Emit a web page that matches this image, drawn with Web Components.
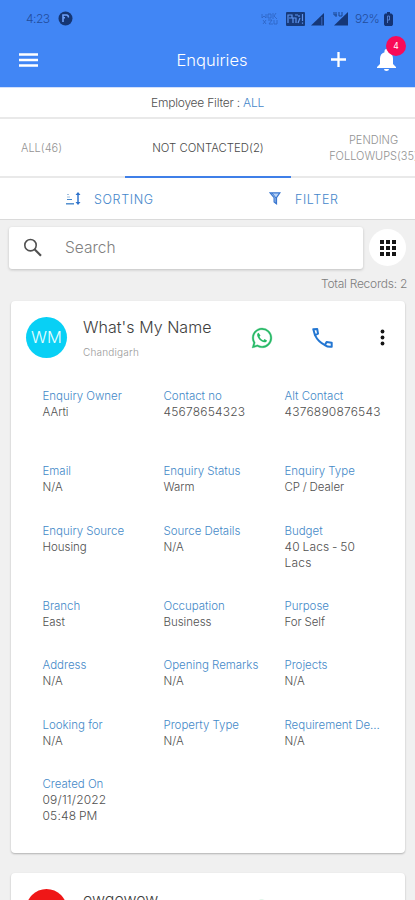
<!DOCTYPE html>
<html lang="en"><head><meta charset="utf-8"><title>Enquiries</title>
<style>
html,body{margin:0;height:100%}
body{width:415px;height:900px;overflow:hidden;background:#f0f0f0;font-family:Inter,"Liberation Sans",sans-serif;font-weight:300;color:#555}
</style></head><body>
<enquiries-app></enquiries-app>
<script>
const define=(name,html,init)=>customElements.define(name,class extends HTMLElement{
  constructor(){
    super();
    const t=document.createElement('template');
    t.innerHTML='<style>*{box-sizing:border-box}svg{display:block;flex:none}</style>'+html;
    this.attachShadow({mode:'open'}).append(t.content.cloneNode(true));
  }
  connectedCallback(){ if(init) init(this,this.shadowRoot); }
});

define('status-bar',`
<style>
:host{display:flex;align-items:center;height:37px;padding:0 22px 0 26px;color:#234d9c;font-size:12px;line-height:14px}
.time{width:25px;letter-spacing:-.5px;margin-right:7px}.gap{flex:1}.pct{width:25px;letter-spacing:-.5px;margin:0 4px 0 6px}
</style>
<span class="time">4:23</span>
<svg width="15" height="15" viewBox="0 0 15 15"><circle cx="7.5" cy="7.5" r="7" fill="#153674"/><path d="M5 11V4h3.500a2 2 0 0 1 1.800 2.500M5 6.800h2" fill="none" stroke="#6ca0fa" stroke-width="1.600"/></svg>
<span class="gap"></span>
<svg width="17" height="14" viewBox="0 0 17 14" fill="none" stroke="#2a5bb5" stroke-width=".8" opacity=".8"><path d="M1 2v4l2-2 2 2V2M7 2h3v4H7zM12 1v6M15 1l-2 3 3 3M2 8l3 4M5 8l-3 4M7 8h4l-3 4h4M13 8v4h3V8"/></svg>
<svg width="19" height="14" viewBox="0 0 19 14" style="margin-left:8px"><rect width="19" height="14" rx="1" fill="#173a7a"/><path d="M2 11V3h4v3H3M7 11V6h3v5M9 3h3M12 11l2-5M13 3v2M16.5 2v7M16.5 10.5v1.3" fill="none" stroke="#5d93ef" stroke-width="1.2"/></svg>
<svg width="14" height="14" viewBox="0 0 14 14" style="margin-left:6px"><path d="M0 13.5L13 1v12.5z" fill="#153778"/><path d="M10.8 5v8" stroke="#3969be"/></svg>
<svg width="16" height="15" viewBox="0 0 16 15" style="margin-left:8px"><path d="M1 14.500L15 1v13.500z" fill="#153778"/><path d="M1 1v3h3M3 1v5M6 1v4h3M9 1v4" fill="none" stroke="#1d468f"/></svg>
<span class="pct">92%</span>
<svg width="9" height="14" viewBox="0 0 9 14"><path d="M3 0h3v1.500h1.500L9 3v9.500L8 14H1l-1-1.500V3l1-1.500h2z" fill="#143373"/><path d="M3.500 11V4h2v4h-2" fill="none" stroke="#5f8fe2" stroke-width=".8"/></svg>`);

define('app-bar',`
<style>
:host{display:grid;grid-template-columns:120px 1fr 120px;align-items:center;height:50.500px;color:#fff;padding-bottom:5px}
.menu{margin-left:19px}h1{margin:0;text-align:center;font-size:16.500px;font-weight:350;line-height:20px;letter-spacing:0;white-space:nowrap;padding-left:9px}
.right{display:flex;align-items:center;padding-left:36px}.bell{position:relative;margin-left:31px}
.badge{position:absolute;left:9px;top:-13px;width:20px;height:20px;border-radius:50%;background:#f90a57;font-size:8.500px;font-weight:400;line-height:20px;text-align:center}
</style>
<svg class="menu" width="20" height="14" viewBox="0 0 20 14"><path d="M0 1.500h19M0 7h19M0 12.500h19" stroke="#fff" stroke-width="2.600"/></svg>
<h1><slot></slot></h1>
<div class="right"><svg width="15" height="15" viewBox="0 0 15 15"><path d="M7.500 0v15M0 7.500h15" stroke="#fff" stroke-width="2.300"/></svg>
<div class="bell"><svg width="19" height="22" viewBox="0 0 19 22" fill="#fff"><path d="M7.500 3.300V2a2 2 0 0 1 4 0v1.300c3 .8 4.500 3.400 4.500 6.300v5.400l3 3v1H0v-1l3-3V9.600c0-2.900 1.500-5.500 4.500-6.300zM7 20h5a2.500 2 0 0 1-5 0z"/></svg><span class="badge">4</span></div></div>`);

define('employee-filter',`
<style>:host{display:flex;justify-content:center;align-items:center;height:31px;background:#fff;border-bottom:2px solid #e9e9e9;font-size:12px;line-height:16px;color:#505050}
span{white-space:pre;letter-spacing:-.22px}b{font-weight:300;color:#4587ca}</style><span>Employee Filter : <b><slot></slot></b></span>`);

define('tab-item',`
<style>:host{display:flex;align-items:center;justify-content:center;text-align:center;color:#929292;font-size:11px;line-height:16px;white-space:pre;letter-spacing:0}
:host([active]){color:#484848;border-bottom:2px solid #3f7fe8;margin-bottom:-2px;font-size:11.300px;letter-spacing:.04px}</style><span><slot></slot></span>`);

define('tab-strip',`
<style>:host{display:grid;grid-template-columns:125px 166px 165px;height:59px;background:#fff;border-bottom:2px solid #e9e9e9;overflow:visible}
</style><slot></slot>`);

define('tool-bar',`
<style>:host{display:flex;align-items:center;height:41.500px;background:#fff;border-bottom:1.500px solid #dadada;color:#4687cb;font-size:12.500px;letter-spacing:.62px}
div{display:flex;align-items:center}.a{margin-left:66px;gap:13px;width:203px}.b{gap:14px}span{padding-top:2px}</style>
<div class="a"><svg width="15" height="13" viewBox="0 0 15 13" fill="none"><path d="M0 11.800h8" stroke="#4687cb" stroke-width="1.400"/><path d="M1 7.500h5" stroke="#4687cb"/><path d="M1 2.500h2M1 5h3" stroke="#89afd6" stroke-width=".8"/><path d="M12 1v10" stroke="#2f73cc" stroke-width="1.500"/><path d="M9.500 3L12 0l2.500 3zM9.500 10l2.500 3 2.500-3z" fill="#2f73cc"/></svg><span>SORTING</span></div>
<div class="b"><svg width="12" height="13" viewBox="0 0 11 13"><path d="M.6.800h9.800L7 5.600v6.200L4.600 10V5.600z" fill="#b9d3f6" stroke="#3976cf" stroke-width="1.200"/><path d="M2.500 1l4 5v5.500" fill="none" stroke="#3976cf"/></svg><span>FILTER</span></div>`);

define('search-row',`
<style>:host{display:flex;align-items:center;padding:7px 9px 0;height:49px}
.box{width:354px;height:42px;background:#fff;border-radius:3px;box-shadow:0 1px 3px #0003;display:flex;align-items:center;padding-left:14px;font-size:15.500px;color:#808080;gap:22px;letter-spacing:0}
.grid{margin-left:6px;width:37px;height:37px;background:#fff;border-radius:50%;display:grid;place-items:center;flex:none}</style>
<div class="box"><svg width="20" height="20" viewBox="0 0 20 20" fill="none" stroke="#505050"><circle cx="7.500" cy="7.200" r="5.700" stroke-width="1.600"/><path d="M11.500 11.300l6.500 6.400" stroke-width="2.200"/></svg><span>Search</span></div>
<div class="grid"><svg width="18" height="18" viewBox="0 0 18 18" fill="#151515"><path d="M1 1h4v4H1zM7 1h4v4H7zM13 1h4v4h-4zM1 7h4v4H1zM7 7h4v4H7zM13 7h4v4h-4zM1 13h4v4H1zM7 13h4v4H7zM13 13h4v4h-4z"/></svg></div>`);

define('total-records',`<style>:host{display:block;text-align:right;height:32px;padding:7px 8px 0 0;font-size:12px;line-height:16px;letter-spacing:-.26px;color:#7d7d7d}</style><slot></slot>`);

define('data-field',`
<style>:host{display:block;font-size:11.500px;letter-spacing:-.02px;width:97px}
.l{color:#4489c8;line-height:15px;white-space:nowrap}.v{line-height:16px;color:#505050;white-space:pre;word-spacing:-.5px}
.num{font-size:12px;letter-spacing:.2px;word-spacing:-1px}</style>
<div class="l"></div><div class="v"><slot></slot></div>`,(h,r)=>{
  r.querySelector('.l').textContent=h.getAttribute('label');
  r.querySelector('.v').classList.toggle('num',/\d/.test(h.textContent));
});

define('enquiry-card',`
<style>:host{display:block;background:#fff;border-radius:4px;margin:0 10px 20px 11px;height:552px;box-shadow:0 1px 2px #0004}
header{display:flex;align-items:flex-start;padding:16px 0 0 15px;height:88.600px}
.av{width:41px;height:41px;border-radius:50%;background:var(--avatar);color:#e8ffff;font-size:16.500px;font-weight:300;display:grid;place-items:center;flex:none}
.n{width:183px;padding-left:16px}.name{font-size:16px;line-height:20px;color:#3e3e3e;letter-spacing:.04px;white-space:nowrap}.city{font-size:10px;line-height:12px;margin-top:9px;color:#999;letter-spacing:.2px}
.wa{margin:9px 0 0 0}.ph{margin:11px 0 0 38px}.dots{margin:12px 0 0 46.500px}
.fields{display:grid;grid-template-columns:121px 121px 100px;grid-template-rows:75.300px 59.300px 75.300px 59.300px 59.300px 59.300px;padding-left:31.500px}</style>
<header><div class="av"></div><div class="n"><div class="name"></div><div class="city"></div></div>
<svg class="wa" width="24" height="24" viewBox="0 0 24 24" fill="#27b966"><path d="M19.050 4.910A9.820 9.820 0 0 0 12.040 2C6.580 2 2.130 6.450 2.130 11.910c0 1.750.46 3.450 1.320 4.950L2.050 22l5.250-1.380c1.450.79 3.080 1.210 4.740 1.210 5.460 0 9.910-4.450 9.910-9.910 0-2.650-1.030-5.140-2.900-7.010zM12.040 20.150c-1.480 0-2.930-.4-4.200-1.150l-.3-.18-3.120.82.830-3.040-.2-.31a8.260 8.260 0 0 1-1.260-4.380c0-4.540 3.700-8.240 8.240-8.240a8.240 8.240 0 0 1 0 16.480z" stroke="#27b966" stroke-width=".3"/><path d="M8.500 6.800c-.8.200-1.500 1.300-1.300 2.600.7 3.300 3.900 6.200 7.200 6.900 1.300.2 2.500-.7 2.600-1.900l-2.500-1.300-1.100 1.300c-1.900-.8-3-1.900-3.900-3.700l1-1.200z"/></svg>
<svg class="ph" width="21" height="20" viewBox="0 0 21 20"><path d="M1.300 1.200L5.200 1l.8 4.600-3 1.600zM3 7.200c2.200 4.800 5.200 7.600 9.900 9.900M12.900 17.100l1.700-3 5.100.7v3.900c-2.500.4-4.900-.2-6.800-1.600z" fill="none" stroke="#2376d2" stroke-width="2" stroke-linejoin="round"/></svg>
<svg class="dots" width="5" height="17" viewBox="0 0 5 17" fill="#151515"><circle cx="2.500" cy="2.500" r="1.900"/><circle cx="2.500" cy="8.500" r="1.900"/><circle cx="2.500" cy="14.500" r="1.900"/></svg></header>
<div class="fields"><slot></slot></div>`,(h,r)=>{
  r.querySelector('.av').textContent=h.getAttribute('initials');
  r.querySelector('.name').textContent=h.getAttribute('name');
  r.querySelector('.city').textContent=h.getAttribute('city');
});

const rows=[['Enquiry Owner','AArti'],['Contact no','45678654323'],['Alt Contact','4376890876543'],['Email','N/A'],['Enquiry Status','Warm'],['Enquiry Type','CP / Dealer'],['Enquiry Source','Housing'],['Source Details','N/A'],['Budget','40 Lacs - 50\nLacs'],['Branch','East'],['Occupation','Business'],['Purpose','For Self'],['Address','N/A'],['Opening Remarks','N/A'],['Projects','N/A'],['Looking for','N/A'],['Property Type','N/A'],['Requirement De...','N/A'],['Created On','09/11/2022\n05:48 PM']];

define('enquiries-app',`
<style>:host{display:block;width:415px;height:900px;overflow:hidden}.top{background:#4186f5;border-bottom:1px solid #d2e0fb;height:88px}</style>
<div class="top"><status-bar></status-bar><app-bar>Enquiries</app-bar></div>
<employee-filter>ALL</employee-filter>
<tab-strip><tab-item style="padding-right:42px">ALL(46)</tab-item><tab-item active>NOT CONTACTED(2)</tab-item><tab-item>PENDING
FOLLOWUPS(35)</tab-item></tab-strip>
<tool-bar></tool-bar><search-row></search-row><total-records>Total Records: 2</total-records>
<enquiry-card initials="WM" name="What's My Name" city="Chandigarh" style="--avatar:#08d0f5">${rows.map(([l,v])=>`<data-field label="${l}">${v}</data-field>`).join('')}</enquiry-card>
<enquiry-card initials="" name="ewqewew" city="" style="--avatar:#ef1717"></enquiry-card>`);
</script>
</body></html>
